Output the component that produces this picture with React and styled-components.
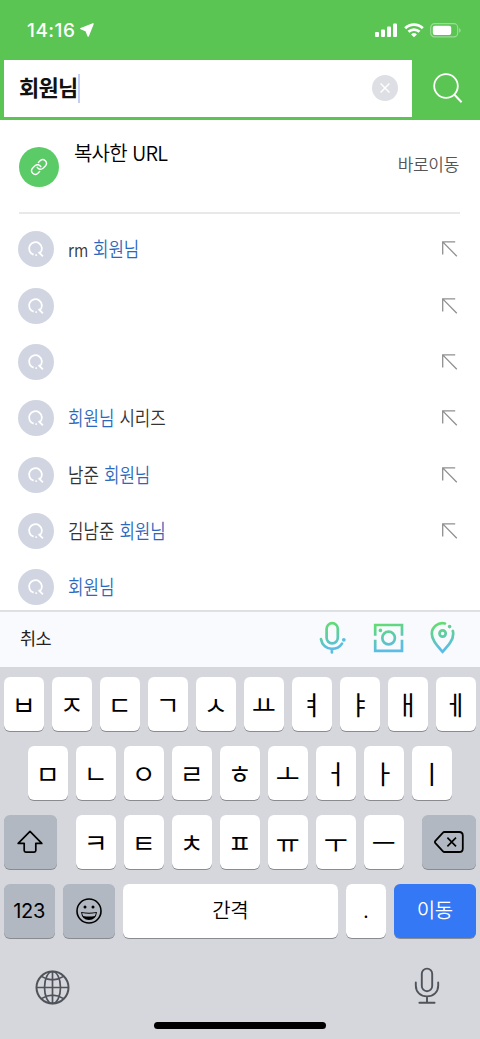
import styled, { createGlobalStyle } from "styled-components";

const suggestions = [
    [{text:"rm ",latin:true},{text:"회원님",match:true}],
    [],
    [],
    [{text:"회원님",match:true},{text:" 시리즈"}],
    [{text:"남준 "},{text:"회원님",match:true}],
    [{text:"김남준 "},{text:"회원님",match:true}],
    [{text:"회원님",match:true}]
];
const firstRow = ["ㅂ","ㅈ","ㄷ","ㄱ","ㅅ","ㅛ","ㅕ","ㅑ","ㅐ","ㅔ"];
const secondRow = ["ㅁ","ㄴ","ㅇ","ㄹ","ㅎ","ㅗ","ㅓ","ㅏ","ㅣ"];
const thirdRow = ["ㅋ","ㅌ","ㅊ","ㅍ","ㅠ","ㅜ","ㅡ"];

export default function App(){
    return (
        <Screen>
            <GlobalStyle/>
            <Header/>
            <CopiedUrl/>
            <Suggestions>
                {suggestions.map((parts,index)=>(
                    <Suggestion key={index} parts={parts} last={index===suggestions.length-1}/>
                ))}
            </Suggestions>
            <Toolbar/>
            <Keyboard/>
        </Screen>
    );
}

function Header(){
    return (
        <Top>
            <StatusBar>
                <Time>14:16</Time>
                <svg width="14" height="14" viewBox="0 0 14 14">
                    <path d="M13 0.9L0.9 5.6L6.2 7.9L8.2 13Z" fill="#fff" stroke="#fff" strokeWidth="1.5" strokeLinejoin="round"/>
                </svg>
                <StatusIcons>
                    <svg width="23" height="15" viewBox="0 0 23 15" fill="#fff">
                        <rect x="0" y="9" width="4" height="5" rx="1"/>
                        <rect x="6" y="6.6" width="4" height="7.4" rx="1"/>
                        <rect x="12" y="3.6" width="4" height="10.4" rx="1"/>
                        <rect x="18" y="0.4" width="4" height="13.6" rx="1"/>
                    </svg>
                    <svg width="20" height="15" viewBox="0 0 20 15" fill="none" stroke="#fff" strokeWidth="2.8">
                        <path d="M1.2 5.2a12.6 12.6 0 0 1 17.6 0"/>
                        <path d="M4.5 8.8a7.9 7.9 0 0 1 11 0"/>
                        <path d="M10 14.3L7.1 11.4a4.1 4.1 0 0 1 5.8 0Z" fill="#fff" stroke="none"/>
                    </svg>
                    <svg width="32" height="15" viewBox="0 0 32 15">
                        <rect x="0.7" y="0.7" width="27" height="13.2" rx="3.8" fill="none" stroke="#fff" strokeOpacity="0.4" strokeWidth="1.2"/>
                        <rect x="2.8" y="2.7" width="18.4" height="9.2" rx="2" fill="#fff"/>
                        <path d="M29.3 5v4.8c1.7-.8 1.7-4 0-4.8Z" fill="#fff" fillOpacity="0.5"/>
                    </svg>
                </StatusIcons>
            </StatusBar>
            <SearchBar>
                <Field>
                    <Query>회원님</Query>
                    <Caret/>
                    <Clear>
                        <svg width="10" height="10" viewBox="0 0 10 10" stroke="#fff" strokeWidth="1.4">
                            <path d="M0.6 0.6L9.4 9.4M9.4 0.6L0.6 9.4"/>
                        </svg>
                    </Clear>
                </Field>
                <SearchButton>
                    <svg width="30" height="31" viewBox="0 0 30 31" fill="none" stroke="#fff" strokeWidth="1.8">
                        <circle cx="13" cy="13" r="11.8"/>
                        <path d="M21 21.2L28.6 29.2" strokeWidth="2"/>
                    </svg>
                </SearchButton>
            </SearchBar>
        </Top>
    );
}

function CopiedUrl(){
    return (
        <Copied>
            <LinkBadge>
                <svg width="18" height="18" viewBox="0 0 24 24" fill="none" stroke="#fff" strokeWidth="1.9" strokeLinecap="round">
                    <path d="M9.6 12.4a4.9 4.9 0 0 0 7.9 1.1l3.2-3.2a4.9 4.9 0 0 0-6.9-6.9l-2.6 2.6"/>
                    <path d="M14.4 11.6a4.9 4.9 0 0 0-7.9-1.1l-3.2 3.2a4.9 4.9 0 0 0 6.9 6.9l2.6-2.6"/>
                </svg>
            </LinkBadge>
            <CopiedTitle>복사한 URL</CopiedTitle>
            <GoNow>바로이동</GoNow>
        </Copied>
    );
}

function Suggestion({parts,last}){
    return (
        <Row>
            <RowBadge>
                <svg width="18" height="18" viewBox="0 0 18 18" fill="none" stroke="#fff" strokeWidth="1.8">
                    <path d="M6.6 14.7A6.4 6.4 0 1 1 12.9 13.2"/>
                    <path d="M11.6 12L15.9 16.4"/>
                    <path d="M8.4 15.1h1.5"/>
                </svg>
            </RowBadge>
            <RowText>
                {parts.map((part,index)=>(
                    part.match
                        ? <Match key={index}>{part.text}</Match>
                        : <Plain key={index} $latin={part.latin}>{part.text}</Plain>
                ))}
            </RowText>
            {!last && (
                <svg width="16" height="16" viewBox="0 0 16 16" fill="none" stroke="#909090" strokeWidth="1.3">
                    <path d="M0.7 13.6V0.9H13.2M0.7 0.9L14.8 15.2"/>
                </svg>
            )}
        </Row>
    );
}

function Toolbar(){
    return (
        <Tools>
            <Cancel>취소</Cancel>
            <svg width="28" height="34" viewBox="0 0 28 34" fill="none" stroke="url(#tool)" strokeWidth="2.7" strokeLinecap="round">
                <defs>
                    <linearGradient id="tool" gradientUnits="userSpaceOnUse" x1="8" y1="1" x2="14" y2="28">
                        <stop offset="0" stopColor="#62df6c"/>
                        <stop offset="0.5" stopColor="#5fcca6"/>
                        <stop offset="1" stopColor="#5bbde4"/>
                    </linearGradient>
                </defs>
                <rect x="8.6" y="2.2" width="11.2" height="20.2" rx="5.6"/>
                <path d="M3 18.2C4 24.2 8.6 27.8 13.9 27.8C18.2 27.8 22 25.8 24 22.6M13.9 28V31.4"/>
                <circle cx="25.8" cy="18.8" r="1.9" fill="#5cbfde" stroke="none"/>
            </svg>
            <svg width="32" height="34" viewBox="0 0 32 34" fill="none" stroke="url(#tool)" strokeWidth="2.7">
                <path d="M3.2 14.8V4H30V14.8M30 18.8V29.8H3.2V18.8"/>
                <circle cx="16.6" cy="17" r="6.3"/>
                <circle cx="8.4" cy="9.4" r="1.8" fill="#5fd48c" stroke="none"/>
            </svg>
            <svg width="26" height="34" viewBox="0 0 26 34" fill="none" stroke="url(#tool)" strokeWidth="2.7" strokeLinecap="round">
                <path d="M15 2.5C8 1 1.8 5.8 1.8 12.8C1.8 19 6.6 24 12.6 30.8C18.8 24 23.2 19 23.2 13Q23.3 11.4 22.8 10"/>
                <circle cx="12.6" cy="12.5" r="3.1"/>
                <circle cx="19.6" cy="5.6" r="1.8" fill="#5fcf96" stroke="none"/>
            </svg>
        </Tools>
    );
}

function Keyboard(){
    return (
        <Board>
            <KeyRow>
                {firstRow.map((letter)=><Key key={letter}>{letter}</Key>)}
            </KeyRow>
            <KeyRow>
                {secondRow.map((letter)=><Key key={letter}>{letter}</Key>)}
            </KeyRow>
            <KeyRow $spread>
                <Key $width="53.5px" $color="#b2b8c1">
                    <svg width="26" height="24" viewBox="0 0 26 24" fill="none" stroke="#000" strokeWidth="1.7" strokeLinejoin="round">
                        <path d="M13 1.4L1.2 13.4H7.2V20.6Q7.2 22.2 8.8 22.2H17.2Q18.8 22.2 18.8 20.6V13.4H24.8Z"/>
                    </svg>
                </Key>
                <Letters>
                    {thirdRow.map((letter)=><Key key={letter}>{letter}</Key>)}
                </Letters>
                <Key $width="53.5px" $color="#b2b8c1">
                    <svg width="30" height="22" viewBox="0 0 30 22" fill="none" stroke="#000" strokeWidth="1.8" strokeLinejoin="round">
                        <path d="M10.4 1H25.2Q28.8 1 28.8 4.6V17.4Q28.8 21 25.2 21H10.4Q9.6 21 9 20.3L1.4 12.2Q.4 11 1.4 9.8L9 1.7Q9.6 1 10.4 1Z"/>
                        <path d="M13.4 6.6L22 15.4M22 6.6L13.4 15.4" strokeWidth="1.6"/>
                    </svg>
                </Key>
            </KeyRow>
            <KeyRow>
                <Key $width="51px" $color="#b2b8c1"><Numbers>123</Numbers></Key>
                <Key $width="52px" $color="#b2b8c1">
                    <svg width="26" height="26" viewBox="0 0 26 26" fill="none" stroke="#000" strokeWidth="1.6">
                        <circle cx="13" cy="13" r="12"/>
                        <circle cx="9" cy="9" r="1.5" fill="#000" stroke="none"/>
                        <circle cx="17" cy="9" r="1.5" fill="#000" stroke="none"/>
                        <path d="M5 14Q13 15.6 21 14Q20 22 13 22Q6 22 5 14Z" fill="#000" stroke="none"/>
                        <path d="M6.2 15.1Q13 16.5 19.8 15.1Q19.5 17 18.8 18Q13 19.2 7.2 18Q6.5 17 6.2 15.1Z" fill="#b2b8c1" stroke="none"/>
                    </svg>
                </Key>
                <Key $width="215px"><KeyWord>간격</KeyWord></Key>
                <Key><KeyWord>.</KeyWord></Key>
                <Key $width="82px" $color="#3478f6"><KeyWord $light>이동</KeyWord></Key>
            </KeyRow>
            <Bottom>
                <Globe width="35" height="35" viewBox="0 0 35 35" fill="none" stroke="#50535a" strokeWidth="1.7">
                    <circle cx="17.5" cy="17.5" r="16" strokeWidth="2"/>
                    <ellipse cx="17.5" cy="17.5" rx="8" ry="16"/>
                    <path d="M17.5 1.5V33.5M1.5 17.5H33.5M6.4 6.4Q17.5 13.4 28.6 6.4M6.4 28.6Q17.5 21.6 28.6 28.6"/>
                </Globe>
                <svg width="26" height="38" viewBox="0 0 26 38" fill="none" stroke="#50535a" strokeWidth="1.9" strokeLinecap="round">
                    <rect x="7.8" y="1.6" width="10.4" height="22.6" rx="5.2"/>
                    <path d="M1.8 15.4V18.4C1.8 25 6.4 29.4 13 29.4C19.6 29.4 24.2 25 24.2 18.4V15.4M13 29.4V35.8M5.4 35.8H20.6"/>
                </svg>
            </Bottom>
            <HomeIndicator/>
        </Board>
    );
}

const GlobalStyle = createGlobalStyle`
    *{
        box-sizing:border-box;
    }
    body{
        margin:0;
        background:#fff;
        font-family:"Noto Sans CJK KR", sans-serif;
    }
    svg{
        display:block;
        flex-shrink:0;
    }
`
const Screen = styled.div`
    width:480px;
    height:1039px;
    overflow:hidden;
    display:flex;
    flex-direction:column;
    background:#fff;
`
const Top = styled.header`
    height:120px;
    flex-shrink:0;
    background:#5ac553;
`
const StatusBar = styled.div`
    height:60px;
    padding:0 18px 0 27px;
    display:flex;
    align-items:center;
`
const Time = styled.span`
    width:49px;
    margin-right:4px;
    font-family:Inter, sans-serif;
    font-size:19px;
    font-weight:500;
    letter-spacing:0.5px;
    color:#fff;
`
const StatusIcons = styled.div`
    margin-left:auto;
    display:flex;
    gap:6px;
`
const SearchBar = styled.div`
    height:56.5px;
    padding-left:4px;
    display:flex;
`
const Field = styled.div`
    width:408px;
    padding:0 14px 0 15px;
    display:flex;
    align-items:center;
    background:#fff;
`
const Query = styled.span`
    height:56px;
    line-height:52px;
    font-size:22px;
    font-weight:700;
    letter-spacing:-0.7px;
    color:#111;
`
const Caret = styled.div`
    width:2px;
    height:29px;
    background:#c5cdf5;
`
const Clear = styled.button`
    width:26px;
    height:26px;
    margin-left:auto;
    padding:0;
    display:flex;
    align-items:center;
    justify-content:center;
    border:none;
    border-radius:50%;
    background:#dedfe4;
`
const SearchButton = styled.button`
    flex:1;
    padding:0 0 0 4px;
    display:flex;
    align-items:center;
    justify-content:center;
    border:none;
    background:none;
`
const Copied = styled.section`
    height:94px;
    margin:0 20px 0 19px;
    flex-shrink:0;
    display:flex;
    align-items:flex-start;
    border-bottom:2px solid #e8e8e8;
`
const LinkBadge = styled.div`
    width:40px;
    height:40px;
    margin-top:27px;
    display:flex;
    align-items:center;
    justify-content:center;
    border-radius:50%;
    background:#5bcb67;
`
const CopiedTitle = styled.span`
    margin:19px 0 0 15px;
    font-size:20px;
    font-weight:350;
    line-height:28px;
    letter-spacing:-0.8px;
    word-spacing:1.5px;
    color:#000;
`
const GoNow = styled.span`
    margin:31px 1px 0 auto;
    font-size:17px;
    font-weight:350;
    line-height:26px;
    letter-spacing:-0.3px;
    color:#555;
`
const Suggestions = styled.div`
    height:396px;
    padding-top:7.2px;
    flex-shrink:0;
    overflow:hidden;
`
const Row = styled.div`
    height:56.3px;
    padding:0 22px 0 18px;
    display:flex;
    align-items:center;
`
const RowBadge = styled.div`
    width:36px;
    height:36px;
    display:flex;
    align-items:center;
    justify-content:center;
    border-radius:50%;
    background:#d0d5e1;
`
const RowText = styled.span`
    flex:1;
    margin-left:14px;
    font-size:20px;
    font-weight:350;
    line-height:30px;
    word-spacing:1.5px;
    color:#333;
    white-space:pre;
    transform:scaleX(0.84);
    transform-origin:left;
`
const Plain = styled.span`
    font-size:${({$latin})=>$latin ? "18.5px" : "20px"};
`
const Match = styled.b`
    font-weight:350;
    color:#2b68bd;
`
const Tools = styled.div`
    height:57px;
    padding:0 24px 3px 20px;
    flex-shrink:0;
    display:flex;
    align-items:center;
    gap:26px;
    border-top:2px solid #dfe0e4;
    background:#f9fafe;
`
const Cancel = styled.span`
    margin-right:auto;
    padding-bottom:2px;
    font-size:17.5px;
    letter-spacing:-0.5px;
    color:#222;
`
const Board = styled.div`
    height:372px;
    padding:10px 0.6px 0 0;
    display:flex;
    flex-direction:column;
    align-items:center;
    background:#d5d7dd;
`
const KeyRow = styled.div`
    width:472px;
    margin-bottom:15px;
    display:flex;
    justify-content:${({$spread})=>$spread ? "space-between" : "center"};
    gap:${({$spread})=>$spread ? "0" : "8px"};
`
const Letters = styled.div`
    display:flex;
    gap:8px;
`
const Key = styled.button`
    width:${({$width})=>$width || "40px"};
    height:54px;
    padding:0;
    flex-shrink:0;
    display:flex;
    align-items:center;
    justify-content:center;
    border:none;
    border-radius:6px;
    background:${({$color})=>$color || "#fff"};
    box-shadow:0 1px 0 #898b8f;
    font-family:"Noto Sans CJK KR", sans-serif;
    font-size:26px;
    font-weight:400;
    line-height:48px;
    color:#000;
`
const Numbers = styled.span`
    font-family:Inter, sans-serif;
    font-size:20px;
    font-weight:400;
    letter-spacing:-0.2px;
`
const KeyWord = styled.span`
    padding-bottom:3px;
    font-size:20px;
    font-weight:350;
    letter-spacing:-0.5px;
    color:${({$light})=>$light ? "#fff" : "#000"};
`
const Bottom = styled.div`
    width:100%;
    height:68px;
    padding:14px 39px 0 35px;
    display:flex;
    justify-content:space-between;
`
const Globe = styled.svg`
    margin-top:3px;
`
const HomeIndicator = styled.div`
    width:172px;
    height:7px;
    margin-top:1px;
    border-radius:4px;
    background:#000;
`
